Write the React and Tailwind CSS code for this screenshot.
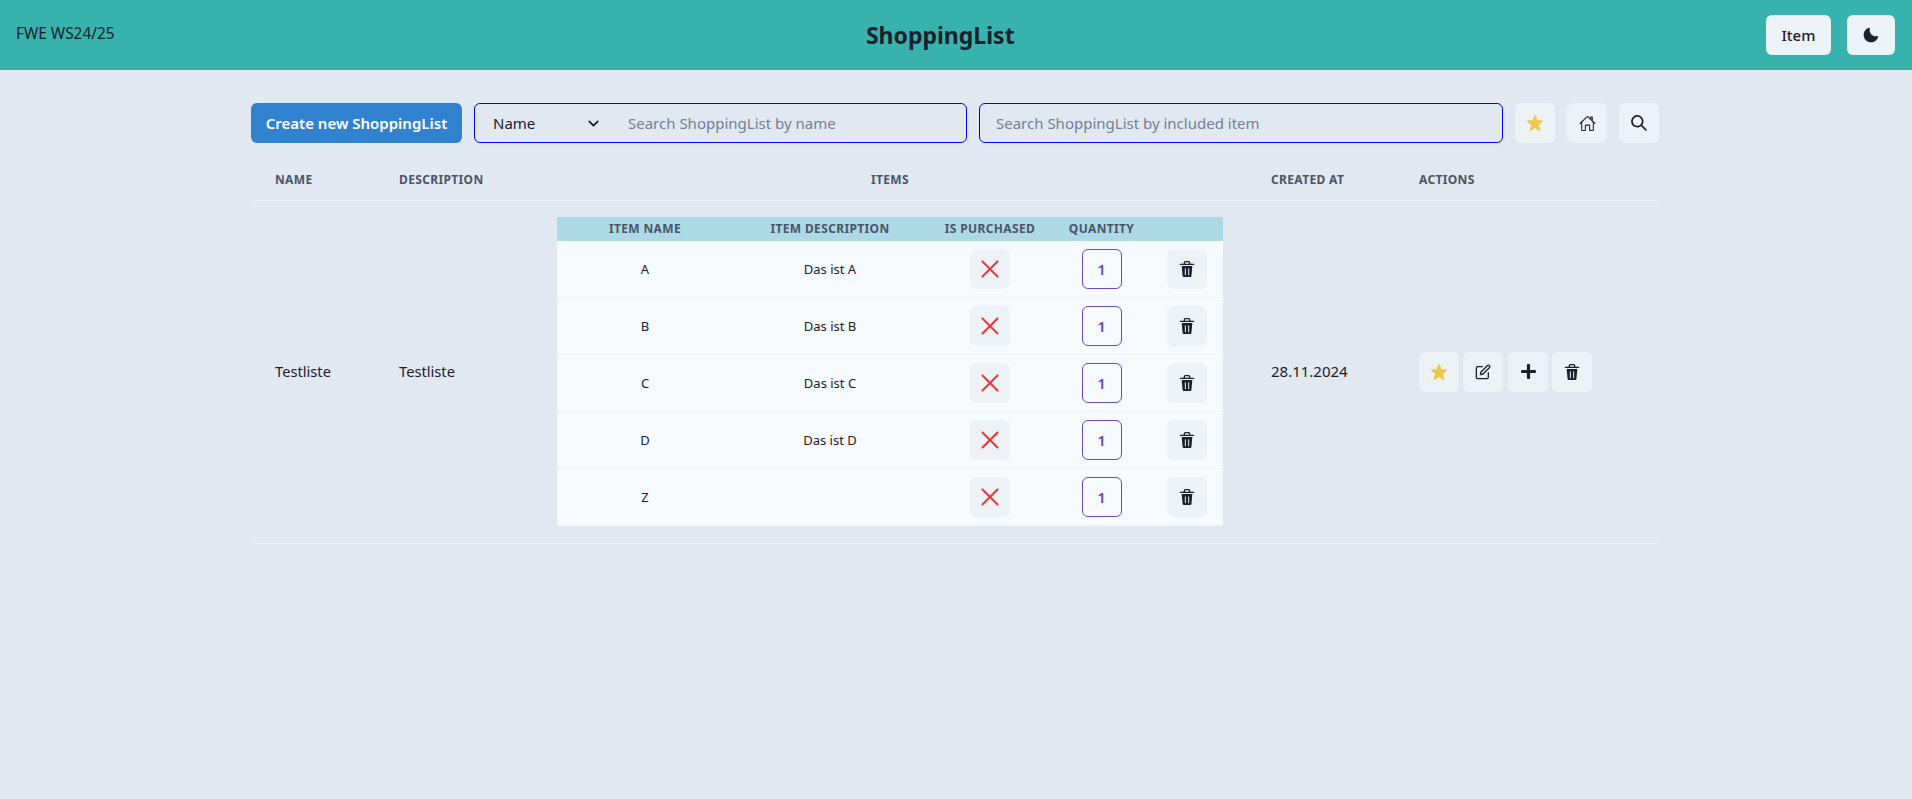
import React from "react";
import { LuChevronDown, LuX } from "react-icons/lu";
import { IoHomeOutline } from "react-icons/io5";
import { FaPlus } from "react-icons/fa";

const Btn = ({ children, className = "w-10" }) => (
  <button className={`${className} h-10 rounded-md bg-[#edf2f7] flex items-center justify-center shrink-0`}>{children}</button>
);

const Solid = ({ d, className }) => (
  <svg viewBox="0 0 24 24" className={className} fill="currentColor"><path d={d} /></svg>
);

const Star = () => (
  <Solid className="w-4 h-4 text-[#ecc94b]" d="M23.555,8.729a1.505,1.505,0,0,0-1.406-.98H16.062a.5.5,0,0,1-.472-.334L13.405,1.222a1.5,1.5,0,0,0-2.81,0l-.005.016L8.41,7.415a.5.5,0,0,1-.471.334H1.85A1.5,1.5,0,0,0,.887,10.4l5.184,4.3a.5.5,0,0,1,.155.543L4.048,21.774a1.5,1.5,0,0,0,2.31,1.684l5.346-3.92a.5.5,0,0,1,.591,0l5.344,3.919a1.5,1.5,0,0,0,2.312-1.683l-2.178-6.535a.5.5,0,0,1,.155-.543l5.194-4.306A1.5,1.5,0,0,0,23.555,8.729Z" />
);
const Moon = () => (
  <Solid className="w-4 h-4" d="M21.4,13.7C20.6,13.9,19.8,14,19,14c-5,0-9-4-9-9c0-0.8,0.1-1.6,0.3-2.4c0.1-0.3,0-0.7-0.3-1 c-0.3-0.3-0.6-0.4-1-0.3C4.3,2.7,1,7.1,1,12c0,6.1,4.9,11,11,11c4.9,0,9.3-3.3,10.6-8.1c0.1-0.3,0-0.7-0.3-1 C22.1,13.7,21.7,13.6,21.4,13.7z" />
);
const Search = () => (
  <Solid className="w-4 h-4" d="M23.384,21.619,16.855,15.09a9.284,9.284,0,1,0-1.768,1.768l6.529,6.529a1.266,1.266,0,0,0,1.768,0A1.251,1.251,0,0,0,23.384,21.619ZM2.75,9.5a6.75,6.75,0,1,1,6.75,6.75A6.758,6.758,0,0,1,2.75,9.5Z" />
);
const Edit = () => (
  <svg viewBox="0 0 24 24" className="w-4 h-4" fill="none" stroke="currentColor" strokeWidth="2" strokeLinecap="round" strokeLinejoin="round">
    <path d="M11 4H4a2 2 0 0 0-2 2v14a2 2 0 0 0 2 2h14a2 2 0 0 0 2-2v-7" />
    <path d="M18.5 2.5a2.121 2.121 0 0 1 3 3L12 15l-4 1 1-4 9.5-9.5z" />
  </svg>
);
const TrashBtn = () => (
  <Btn>
    <Solid className="w-4 h-4 text-[#1a202c]" d="M19.452 7.5H4.547a.5.5 0 00-.5.545l1.287 14.136A2 2 0 007.326 24h9.347a2 2 0 001.992-1.819L19.95 8.045a.5.5 0 00-.129-.382.5.5 0 00-.369-.163zm-9.2 13a.75.75 0 01-1.5 0v-9a.75.75 0 011.5 0zm5 0a.75.75 0 01-1.5 0v-9a.75.75 0 011.5 0zM22 4h-4.75a.25.25 0 01-.25-.25V2.5A2.5 2.5 0 0014.5 0h-5A2.5 2.5 0 007 2.5v1.25a.25.25 0 01-.25.25H2a1 1 0 000 2h20a1 1 0 000-2zM9 3.75V2.5a.5.5 0 01.5-.5h5a.5.5 0 01.5.5v1.25a.25.25 0 01-.25.25h-5.5A.25.25 0 019 3.75z" />
  </Btn>
);

const items = [["A", "Das ist A"], ["B", "Das ist B"], ["C", "Das ist C"], ["D", "Das ist D"], ["Z", ""]];

export default function App() {
  return (
    <div className="min-h-[799px] bg-[#e2e8f0] text-[#1a202c] text-[15px] font-['Noto_Sans',sans-serif]">
      <header className="h-[70px] bg-[#38b2ac] flex items-center justify-between pl-4 pr-[17px]">
        <span className="text-[15.4px] -mt-[3px]">FWE WS24/25</span>
        <h1 className="text-[23px] font-bold">ShoppingList</h1>
        <div className="flex gap-4">
          <button className="h-10 w-[65px] rounded-md bg-[#edf2f7] text-[15px] font-medium">Item</button>
          <Btn className="w-12"><Moon /></Btn>
        </div>
      </header>
      <main className="w-[1408px] ml-[251px]">
        <div className="flex items-center h-10 mt-[33px] gap-3">
          <button className="h-10 w-[211px] rounded-md bg-[#3182ce] text-white text-[15px] font-semibold">Create new ShoppingList</button>
          <div className="w-[493px] h-10 border border-[#0000ff] rounded-md flex items-center">
            <div className="w-[153px] pl-[18px] pr-[26px] flex items-center justify-between">
              <span>Name</span>
              <LuChevronDown size={17} strokeWidth={2.5} />
            </div>
            <span className="text-[#718096]">Search ShoppingList by name</span>
          </div>
          <div className="w-[524px] h-10 border border-[#0000ff] rounded-md flex items-center pl-4 text-[#718096]">
            Search ShoppingList by included item
          </div>
          <Btn><Star /></Btn>
          <Btn><IoHomeOutline size={17} /></Btn>
          <Btn><Search /></Btn>
        </div>
        <table className="mt-[17px] w-[1408px] table-fixed border-collapse">
          <colgroup>
            <col className="w-[124px]" /><col className="w-[158px]" /><col className="w-[714px]" /><col className="w-[148px]" /><col className="w-[264px]" />
          </colgroup>
          <thead>
            <tr className="h-10 border-b border-[#edf2f7] text-[12px] text-[#4a5568] tracking-[0.35px] text-left">
              <th className="pl-6 font-bold">NAME</th>
              <th className="pl-6 font-bold">DESCRIPTION</th>
              <th className="text-center font-bold">ITEMS</th>
              <th className="pl-6 font-bold">CREATED AT</th>
              <th className="pl-6 font-bold">ACTIONS</th>
            </tr>
          </thead>
          <tbody>
            <tr className="h-[343px] border-b border-[#edf2f7]">
              <td className="pl-6 text-[14.7px]">Testliste</td>
              <td className="pl-6 text-[14.7px]">Testliste</td>
              <td className="px-6">
                <table className="w-[666px] table-fixed border-collapse bg-[#f7fafc] text-[13px]">
                  <colgroup>
                    <col className="w-[176px]" /><col className="w-[194px]" /><col className="w-[126px]" /><col className="w-[97px]" /><col className="w-[73px]" />
                  </colgroup>
                  <thead>
                    <tr className="h-6 bg-[#add8e6] text-[12px] text-[#4a5568] tracking-[0.35px] text-center">
                      <th className="font-bold">ITEM NAME</th>
                      <th className="font-bold">ITEM DESCRIPTION</th>
                      <th className="font-bold">IS PURCHASED</th>
                      <th className="font-bold">QUANTITY</th>
                      <th></th>
                    </tr>
                  </thead>
                  <tbody>
                    {items.map(([n, d]) => (
                      <tr key={n} className="h-[57px] border-b border-[#edf2f7] text-center">
                        <td className="pt-px">{n}</td>
                        <td className="pt-px">{d}</td>
                        <td><div className="flex justify-center"><Btn><LuX size={30} strokeWidth={1.7} className="text-[#e53e3e]" /></Btn></div></td>
                        <td><div className="flex justify-center"><div className="w-10 h-10 rounded-md border border-[#6b46c1] text-[#6b46c1] text-[15px] font-semibold flex items-center justify-center">1</div></div></td>
                        <td><div className="flex justify-center"><TrashBtn /></div></td>
                      </tr>
                    ))}
                  </tbody>
                </table>
              </td>
              <td className="pl-6">28.11.2024</td>
              <td className="pl-6">
                <div className="flex gap-1">
                  <Btn><Star /></Btn>
                  <Btn><Edit /></Btn>
                  <Btn className="w-10 ml-px"><FaPlus size={17} /></Btn>
                  <TrashBtn />
                </div>
              </td>
            </tr>
          </tbody>
        </table>
      </main>
    </div>
  );
}
